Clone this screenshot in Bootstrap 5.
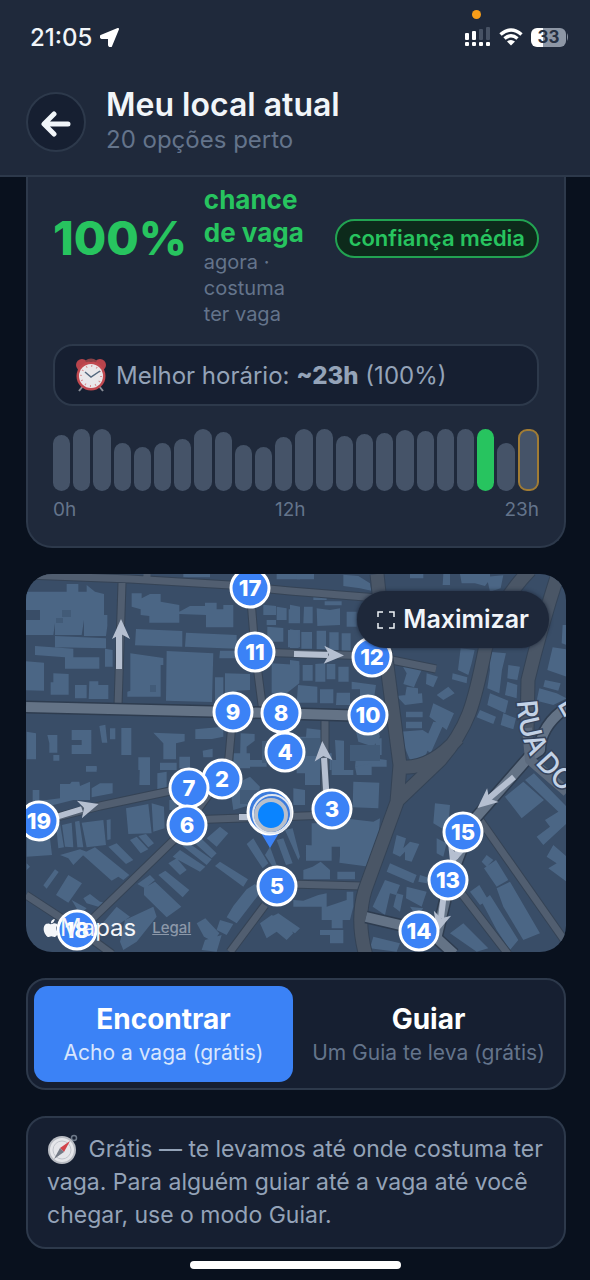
<!DOCTYPE html>
<html lang="pt-BR">
<head>
<meta charset="utf-8">
<meta name="viewport" content="width=device-width, initial-scale=1">
<title>Meu local atual</title>
<link href="https://cdn.jsdelivr.net/npm/bootstrap@5.3.0/dist/css/bootstrap.min.css" rel="stylesheet">
<style>
:root { --page:#09111e; --panel:#1f293b; --inset:#161f31; --line:#2d394b; --muted:#64748b; --soft:#94a3b8; --blue:#3b82f6; --green:#27c45f; }
body { background:var(--page); color:#f1f5f9; font-family:Inter,"Liberation Sans",sans-serif; font-size:22px; line-height:33px; }
.topbar { background:var(--panel); border-bottom:2px solid var(--line); padding:0 21px 18px 26px; }
.statusbar { height:75px; padding:0 0 1px 4px; font-size:24px; font-weight:500; position:relative; }
.rec-dot { position:absolute; right:88px; top:10px; width:9px; height:9px; border-radius:50%; background:#f79d19; }
.battery { width:35px; height:19px; border-radius:6px; background:linear-gradient(90deg,#fff 33%,#8d96a5 33%); color:#263042; font-size:17px; line-height:19px; font-weight:700; text-align:center; }
.title-row { padding-top:12px; }
.back { width:60px; height:60px; border-radius:50%; background:var(--inset); border:2px solid var(--line); padding:0; color:#f1f5f9; }
.page-title { font-size:32px; line-height:35px; font-weight:600; margin:0; }
.subtitle { font-size:24px; line-height:35px; color:var(--muted); }
.content { padding:0 24px 0 26px; }
.chance-card { background:var(--panel); border:2px solid var(--line); border-top:0; border-radius:0 0 26px 26px; padding:6px 25px 24px; }
.percent { font-size:47px; line-height:50px; font-weight:800; color:var(--green); width:130px; padding-top:30px; }
.verdict { color:var(--green); font-size:26px; line-height:33px; font-weight:700; }
.verdict-note { color:var(--muted); font-size:20px; line-height:26px; }
.verdict-box { width:110px; }
.trust { border:2px solid #22a352; background:#0d2a1b; color:var(--green); border-radius:20px; font-size:22px; line-height:35px; font-weight:600; padding:0 12px; margin-top:36px; white-space:nowrap; }
.inset-box { background:var(--inset); border:2px solid var(--line); border-radius:20px; }
.best { margin-top:17px; padding:12px 19px; color:var(--soft); font-size:24px; line-height:33px; }
.best b { font-weight:800; }
.bars { height:62px; margin-top:23px; gap:3px; }
.bars i { flex:1 1 0; background:#455368; border-radius:9px; }
.bars .now { background:var(--green); }
.bars .peak { border:2px solid #a17c34; flex-basis:4px; }
.hours { font-size:19px; line-height:24px; color:var(--muted); margin-top:7px; }
.map { border-radius:26px; overflow:hidden; background:#394d67; position:relative; }
.map > svg { display:block; width:100%; height:auto; }
.maximize { position:absolute; top:17px; right:17px; height:57px; padding:0 20px; border:0; border-radius:29px; background:#1e283a; color:#f1f5f9; font-size:25px; font-weight:600; box-shadow:0 0 4px #1e283a; }
.attribution { position:absolute; left:16px; bottom:8px; font-size:24px; color:#f4f6f9; }
.attribution a { font-size:15px; line-height:33px; color:#8c98a9; font-weight:500; }
.modes { padding:6px; gap:6px; }
.mode { flex:1 1 0; border:0; border-radius:14px; padding:16px 0 13px; background:transparent; color:#fff; }
.mode.active { background:var(--blue); }
.mode strong { display:block; font-size:28px; line-height:34px; font-weight:700; }
.mode span { display:block; font-size:21px; line-height:33px; color:var(--muted); white-space:nowrap; }
.mode.active span { color:#d8e6fd; }
.note { padding:15px 19px; color:var(--soft); font-size:23px; margin:0; }
.note svg { margin:-4px 4px -2px 0; }
.stack { gap:26px; }
.home { width:211px; height:8px; border-radius:4px; background:#fff; margin:12px auto; }
</style>
</head>
<body>
<header class="topbar">
  <div class="statusbar d-flex align-items-center justify-content-between">
    <span class="rec-dot"></span>
    <div class="d-flex align-items-center gap-2"><span>21:05</span>
      <svg width="19" height="19" viewBox="0 0 19 19"><path d="M18 1 11 18q-1 1-2-1V10H2q-2-1-1-2Z" fill="#fff" stroke="#fff" stroke-width="2" stroke-linejoin="round"/></svg></div>
    <div class="d-flex align-items-center gap-2">
      <svg width="26" height="20" viewBox="0 0 26 20" fill="#fff"><rect x="0" y="6" width="4" height="7" rx="1"/><rect x="7" y="4" width="4" height="9" rx="1"/><g fill="#475264"><rect x="14" y="2" width="4" height="11" rx="1"/><rect x="21" y="0" width="4" height="13" rx="1"/></g><rect x="0" y="15" width="4" height="4" rx="1"/><rect x="7" y="15" width="4" height="4" rx="1"/><rect x="14" y="15" width="4" height="4" rx="1"/><rect x="21" y="15" width="4" height="4" rx="1"/></svg>
      <svg width="24" height="18" viewBox="0 0 24 18" fill="none" stroke="#fff" stroke-width="3.500"><path d="M1.500 6.500Q12-2.500 22.500 6.500M5.500 10.500Q12 5 18.500 10.500"/><path d="M8 13.500Q12 10.500 16 13.500L12 17.500Z" fill="#fff" stroke="none"/></svg>
      <div class="d-flex align-items-center"><div class="battery">33</div><svg width="3" height="8"><path d="M1 0Q3 4 1 8Z" fill="#8d96a5"/></svg></div>
    </div>
  </div>
  <div class="title-row d-flex align-items-center">
    <button class="back flex-shrink-0" aria-label="Voltar"><svg width="30" height="26" viewBox="0 0 30 26" fill="none" stroke="currentColor" stroke-width="5" stroke-linecap="round" stroke-linejoin="round"><path d="M27 13H4M13 3 3 13l10 10"/></svg></button>
    <div class="ms-3 ps-1"><h1 class="page-title">Meu local atual</h1><div class="subtitle">20 opções perto</div></div>
  </div>
</header>

<main class="content d-flex flex-column stack">
  <section class="chance-card">
    <div class="d-flex align-items-start">
      <div class="percent">100%</div>
      <div class="verdict-box ms-auto me-auto"><div class="verdict">chance de vaga</div><div class="verdict-note">agora · costuma ter vaga</div></div>
      <span class="trust">confiança média</span>
    </div>
    <div class="inset-box best d-flex align-items-center">
      <svg class="me-2" width="34" height="34" viewBox="0 0 34 34"><path d="M9 28 5 33M25 28l4 5" stroke="#8b8f99" stroke-width="2"/><circle cx="8" cy="7" r="6" fill="#b8444c"/><circle cx="26" cy="7" r="6" fill="#b8444c"/><path d="M12 4Q17 0 22 4" fill="none" stroke="#8a4146" stroke-width="3"/><circle cx="17" cy="18" r="14.500" fill="#c14950"/><circle cx="17" cy="18" r="12" fill="#e9e7ea"/><circle cx="17" cy="18" r="10" fill="none" stroke="#d78a8d" stroke-width="2" stroke-dasharray="1 4.236"/><path d="M11 14l6 5 9-6" fill="none" stroke="#52677d" stroke-width="1.500"/></svg>
      <span>Melhor horário: <b>~23h</b> (100%)</span>
    </div>
    <div class="bars d-flex align-items-end" id="bars"></div>
    <div class="hours d-flex justify-content-between"><span>0h</span><span>12h</span><span>23h</span></div>
  </section>

  <section class="map">
    <svg viewBox="26 574 540 378" font-family="Inter,sans-serif">
      <defs>
        <path id="rua" d="M517 701C518 722 522 744 535 763Q548 780 580 806"/>
        <path id="tip" d="M0-11 9 9 0 4-9 9Z" fill="#b5bfd0"/>
      </defs>
      <g fill="#4b6685">
        <path transform="translate(20 570) scale(.3333)" d="M0 65H140V42H175V65H200V45L225 65 252 72V135H262V168L258 198H192V150L185 195H105V160L100 195H0V150H60V120H0ZM335 70H365V85L390 72H422V95L478 105V125L510 108H555V98H590V118H610V105H640V172H558V135L478 132V158H388V138L362 135V118L335 110ZM348 177 487 183V230L345 226ZM498 188 650 195V236L495 230ZM105 198 258 205V235L105 232ZM45 228 160 236V262H238V296H135V262L45 255ZM255 236 278 240V290H255ZM0 272 72 278V362L0 360ZM100 310 146 312V374H92V337H100ZM165 345H200V385H165ZM208 334H235V345L265 345V387H206ZM331 250 430 264V285H422V380H322V365L331 362ZM440 243 580 250 576 396 438 392ZM600 242H645V265H598ZM585 322H610V370L605 395H585ZM615 310 690 312V360L650 362V385H615ZM730 104 768 108V135H730ZM770 110 800 115V150H770ZM806 118H840V160H806ZM740 150H768V165H740ZM742 170 790 174V215H742ZM804 180H840V232H804ZM755 280 838 285V340L800 370H755ZM20 485 48 490V568H20ZM82 495H112V548H88V520ZM155 480H214V552H155V525H185V510H155ZM238 468 256 464 262 518H246ZM270 475H286V508H270ZM304 474H334V555H304ZM400 488 494 492V514L468 520V568H430V520ZM526 478 610 470V500L576 507H526ZM662 490 704 492V512L680 530V572H660ZM355 562H390V600H355ZM420 578H470V600H420ZM478 560H510V595H478ZM548 542 578 536V562H550ZM640 550H690V595H640ZM100 555H118V572H100ZM490 12H570V22H490ZM770 12H840V28H770ZM198 588H230V600H198Z"/>
        <path transform="translate(290 570) scale(.3333)" d="M20 12H72V28H20ZM160 14 205 18 240 40 244 62 210 55 160 48ZM360 12H400V25H360ZM460 12H480V45H458ZM510 12H600V28L585 48 555 40H515ZM590 20 640 16 632 55 600 65ZM0 104 30 110V155H0ZM42 110H68V160H40ZM80 115 120 120 150 115V165L82 168ZM104 94H155V106H104ZM170 125H200V170H170ZM0 178 26 182V234H0ZM34 186H66V236H34ZM80 182H108V238H80ZM118 187H146V240H118ZM155 190H182V245H155ZM0 270 28 274V330H0ZM38 285H68V332H38ZM76 282 106 280V335H76ZM110 282H136V328H110ZM145 290H176V335H145ZM24 345 82 350V398H20ZM90 358H130V400H90ZM140 368H180V405H138ZM185 335 258 345 250 398 210 390V358H185ZM70 70H110V90H70ZM330 275 395 300 382 328 372 352 340 342 350 310ZM410 310 444 320 430 352 408 342ZM350 350 384 355V380H345ZM320 378 396 370 398 398 345 405ZM348 425H398V442H348ZM348 455H396V475H348ZM330 485 398 480 430 500 395 585 362 575 335 510ZM430 400 492 430 470 480 418 440ZM440 375 475 350 494 370 460 390ZM488 310 532 322 530 340 486 328ZM512 235 554 240 545 280 535 315 504 300ZM430 455 462 460 422 550 398 530ZM598 245 648 250 636 300 628 370 592 355 600 300ZM655 285 690 290 682 330 652 325ZM652 335 682 345 680 385 645 375ZM600 370 655 392 646 430 592 405ZM570 420 618 440 610 462 560 442ZM640 430 678 445 670 478 632 465ZM788 232 830 238V320L772 300ZM765 330 812 340 805 362 760 350ZM748 355 800 370 830 385 790 405 740 392ZM818 165H830V225L815 220ZM50 475 95 480V545L125 550V600H20V500H48ZM135 510 162 512V600H140ZM195 470 260 462 270 500 250 530 205 515ZM200 540H250V565L290 570V590H195ZM258 505H275V555H255Z"/>
        <path transform="translate(20 760) scale(.3333)" d="M38 90H58V120H80L120 115V72H150L155 65H178L180 78 210 65V120H160L100 135 38 150ZM215 85 240 70H278V100L215 112ZM360 0H390V75H358ZM412 40 440 35V90H412ZM198 20H230V35H198ZM20 225 90 235 96 285 20 290ZM108 195 120 190 132 262 115 265ZM126 195 155 188 160 262 135 260ZM165 185 178 182 190 262 172 262ZM185 188 250 180 258 255 200 262ZM260 180 272 178V238L262 240ZM318 145 385 132 395 220 325 222ZM395 130 432 140 434 205 400 215ZM448 120 470 118V150H448ZM120 285 180 268 200 275 160 315 145 295ZM185 282 225 262 328 345 310 360 295 350 275 362ZM265 260 290 250 340 300 318 312ZM330 240 350 230 385 268 362 280ZM355 228 378 222 402 250 385 262ZM105 328 116 336 80 386 70 376ZM145 345 186 370 145 428 108 405ZM190 415 210 402 240 425 262 430 250 445 200 430ZM155 420 200 445 180 462ZM372 385 405 365 484 440 440 472 372 405ZM352 372 390 345 405 360 375 385ZM415 345 436 332 508 390 488 412ZM445 310 470 295 500 330 480 345ZM458 290 480 270 556 320 540 335ZM488 258 505 248 575 298 560 315ZM508 235 530 222 590 280 575 295ZM585 318 600 305 684 358 670 380ZM560 235 600 200 625 220 590 260ZM680 252 700 235 745 310 728 325ZM735 285 750 260 770 315 758 320ZM770 240 790 235 818 310 798 315ZM795 210 818 205 840 290 835 300ZM680 388 705 372 725 392 650 490 620 472 640 438ZM530 490 556 475 598 520 580 545 552 530ZM555 540 605 525 590 575 545 570ZM600 480 640 492 620 525 590 510ZM720 490 755 465 785 480 820 520 800 540 770 515 740 535ZM745 475 775 460 840 505 825 520ZM290 440 330 470 270 510 248 490ZM315 480 400 440 410 470 350 545 310 570 300 545ZM630 80 690 50 720 80 710 130 640 150ZM690 0H740V20H690ZM20 310 30 320 20 330Z"/>
        <path transform="translate(290 760) scale(.3333)" d="M20 0H90V75H45V40H20ZM125 0H160V30H190V45H125ZM190 65 268 68 265 145 188 142ZM10 85 45 90V135H10ZM195 20 245 10V45H200ZM65 190H130L160 175 250 185 270 175 265 240 245 300H150V260H65ZM48 255 125 260V302H48ZM152 265 242 275 238 320 148 308ZM68 320 92 305 120 330V358H40V330ZM142 335H195V358H142ZM40 422 85 405 110 400V440L170 420V395H190V440L180 480H95V440H10V420ZM125 480H158V505H125ZM90 510H160V550H120V525H90ZM250 530 330 550 320 575 240 565ZM320 225 348 235 340 265 360 245 388 252 365 305 345 300V275L330 290 308 280ZM300 310 380 345 370 370 290 335ZM285 360 330 375 318 405 300 400 285 465 248 440ZM320 400 340 405 330 455 310 440ZM350 380 410 395 395 440 348 415ZM390 345 420 355 410 370 385 365ZM440 235 470 250 460 290 440 280ZM435 130 480 135 475 200 455 205 430 190ZM645 110 700 65 762 120 695 175ZM705 60 732 40 830 140 810 160ZM765 180 830 140V190L760 255 740 230 780 200ZM790 255 830 290V365L775 325 800 310 770 290ZM590 285 610 300 590 320 575 305ZM582 325 618 300 655 360 620 380ZM620 385 660 365 750 520 700 540 640 440ZM540 395 568 375 595 420 570 435ZM575 425 600 405 685 540 660 570 620 510ZM480 520 520 490 595 565 560 575ZM360 440 400 445 380 470Z"/>
        <g fill="#425b78"><path d="M62 610h9v7h-9zM56 618h7v5h-7zM150 685h6v7h-6zM300 738h20v18h-20zM262 741h12v22h-12zM350 745h30v16h-30zM240 790h20v14h-20z"/></g>
      </g>
      <g fill="none" stroke-linejoin="round">
        <g stroke="#354355" stroke-width="9">
          <path d="M26 575 130 579 230 585 290 591 378 598M122 583 118 706M250 588 255 650 263 712M255 652 372 656 436 669M325 718V815M45 820 100 806 175 790 232 765M233 712 228 768 180 834 85 926M187 820 330 815M290 884 362 886M265 905 230 952M26 895 75 927 112 954M480 820 567 944M455 885 508 954"/>
        </g>
        <g stroke="#515e70" stroke-width="7">
          <path d="M26 575 130 579 230 585 290 591 378 598M122 583 118 706M250 588 255 650 263 712M255 652 372 656 436 669M325 718V815M45 820 100 806 175 790 232 765M233 712 228 768 180 834 85 926M187 820 330 815M290 884 362 886M265 905 230 952M26 895 75 927 112 954M480 820 567 944M455 885 508 954M147 570v8"/>
        </g>
        <path stroke="#344356" stroke-width="15" d="M377 574 385 650 400 765 397 802 365 890Q356 920 366 956M530 570Q496 605 485 650C474 705 468 728 440 760L398 800M458 738Q430 770 400 767M558 574Q540 630 528 680L527 730"/>
        <path stroke="#4a5666" stroke-width="13" d="M377 574 385 650 400 765 397 802 365 890Q356 920 366 956M530 570Q496 605 485 650C474 705 468 728 440 760L398 800M458 738Q430 770 400 767M558 574Q540 630 528 680L527 730"/>
        <path stroke="#2e3c4f" stroke-width="13" d="M26 707 233 712 370 716M570 705Q540 725 540 750L528 758Q500 790 472 822L450 880 437 935M366 917 430 932 454 954"/>
        <path stroke="#647386" stroke-width="10" d="M26 707 233 712 370 716M570 705Q540 725 540 750L528 758Q500 790 472 822L450 880 437 935M366 917 430 932 454 954"/>
        <path stroke="#5b697c" stroke-width="10" d="M527 728 530 760 567 792"/>
        <path stroke="#b5bfd0" stroke-width="6" d="M119 669V634M294 654 328 655M327 803 324 758M56 817 82 809M514 777 488 799M461 845 455 858M444 893 441 918M239 817h14"/>
      </g>
      <use href="#tip" transform="translate(121 630)"/><use href="#tip" transform="translate(333 655) rotate(92)"/><use href="#tip" transform="translate(323 752) rotate(-4)"/><use href="#tip" transform="translate(88 807) rotate(74)"/><use href="#tip" transform="translate(486 801) rotate(230)"/><use href="#tip" transform="translate(454 856) rotate(198)"/><use href="#tip" transform="translate(440 922) rotate(196)"/>
      <g font-size="28" font-weight="500" fill="#c3d2e6" stroke="#35435a" stroke-width="3" paint-order="stroke">
        <text><textPath href="#rua">RUA DO</textPath></text>
        <text transform="translate(557 704) rotate(60)">E</text>
      </g>
      <g id="pins" font-size="22" font-weight="800" text-anchor="middle"></g>
      <path d="M261 833h18l-9 15Z" fill="#3b82f6"/>
      <circle cx="270" cy="812" r="22" fill="#3b7bdc" stroke="#fff" stroke-width="3"/><circle cx="272" cy="814" r="19" fill="none" stroke="#dfe5ef" stroke-width="2"/>
      <circle cx="271" cy="815" r="15" fill="#0a84ff" stroke="#b7bfcc" stroke-width="4"/>
    </svg>
    <div class="attribution d-flex align-items-center"><svg width="18" height="20" viewBox="0 0 16 16" fill="#f4f6f9"><path d="M11.182.008C11.148-.03 9.923.023 8.857 1.180c-1.066 1.156-.902 2.482-.878 2.516s1.520.087 2.475-1.258.762-2.391.728-2.430m3.314 11.733c-.048-.096-2.325-1.234-2.113-3.422s1.675-2.789 1.698-2.854-.597-.790-1.254-1.157a3.700 3.700 0 0 0-1.563-.434c-.108-.003-.483-.095-1.254.116-.508.139-1.653.589-1.968.607-.316.018-1.256-.522-2.267-.665-.647-.125-1.333.131-1.824.328-.490.196-1.422.754-2.074 2.237-.652 1.482-.311 3.830-.067 4.560s.625 1.924 1.273 2.796c.576.984 1.340 1.667 1.659 1.899s1.219.386 1.843.067c.502-.308 1.408-.485 1.766-.472.357.013 1.061.154 1.782.539.571.197 1.111.115 1.652-.105.541-.221 1.324-1.059 2.238-2.758q.520-1.185.473-1.282"/></svg><span>Mapas</span><a class="ms-3" href="#legal">Legal</a></div>
    <button class="maximize d-flex align-items-center gap-2"><svg width="18" height="18" viewBox="0 0 18 18" fill="none" stroke="currentColor" stroke-width="1.500"><path d="M1 6V1h5M12 1h5v5M17 12v5h-5M6 17H1v-5"/></svg>Maximizar</button>
  </section>

  <div class="inset-box modes d-flex" role="group" aria-label="Modo">
    <button class="mode active"><strong>Encontrar</strong><span>Acho a vaga (grátis)</span></button>
    <button class="mode"><strong>Guiar</strong><span>Um Guia te leva (grátis)</span></button>
  </div>

  <p class="inset-box note"><svg class="align-middle" width="31" height="31" viewBox="0 0 31 31"><circle cx="27" cy="4" r="2.500" fill="none" stroke="#6d7888" stroke-width="1.500"/><circle cx="15" cy="16" r="14" fill="#b9bcc3"/><circle cx="15" cy="16" r="12" fill="#e5e6ea"/><circle cx="15" cy="16" r="9" fill="none" stroke="#c2c5cc"/><path d="M23 7 17 18l-4-4Z" fill="#d1434b"/><path d="M7 25l6-11 4 4Z" fill="#747b87"/></svg> Grátis — te levamos até onde costuma ter vaga. Para alguém guiar até a vaga até você chegar, use o modo Guiar.</p>
</main>
<div class="home"></div>

<script src="https://cdn.jsdelivr.net/npm/bootstrap@5.3.0/dist/js/bootstrap.bundle.min.js"></script>
<script>
// Chance of a free spot for each hour, in percent
const chance = [90,100,100,77,71,77,84,100,95,74,71,87,100,100,89,92,94,98,97,100,100,100,77,100];
document.getElementById('bars').innerHTML = chance.map((v, h) =>
  `<i class="${h === 21 ? 'now' : h === 23 ? 'peak' : ''}" style="height:${v}%"></i>`).join('');
// Spots on the map: number, x, y
const spots = [[17,250,588],[11,255,652],[12,372,657],[10,368,715],[8,281,713],[9,233,712],[4,285,752],[2,222,779],[7,189,788],[6,187,825],[3,332,809],[19,39,821],[5,277,886],[15,463,832],[13,448,880],[14,419,931],[18,77,930]];
document.getElementById('pins').innerHTML = spots.map(([n, x, y]) =>
  `<circle cx="${x}" cy="${y}" r="19" fill="#3b82f6" stroke="#fff" stroke-width="3"/><text x="${x}" y="${y + 8}" fill="#fff">${n}</text>`).join('');
</script>
</body>
</html>
